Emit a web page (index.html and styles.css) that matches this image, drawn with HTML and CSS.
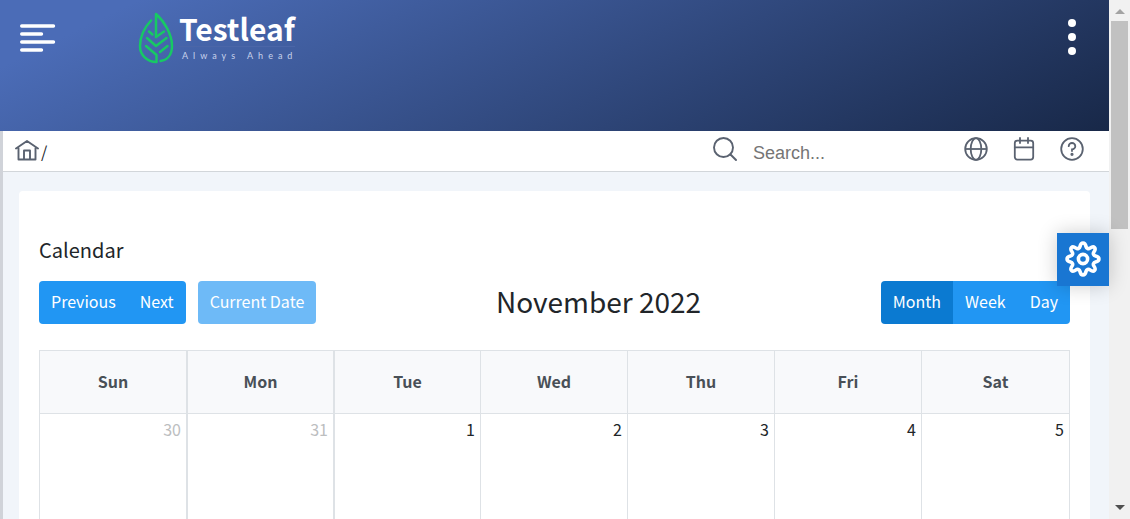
FILE: index.html
```html
<!DOCTYPE html>
<html lang="en">
<head>
<meta charset="utf-8">
<title>Testleaf - Calendar</title>
<link rel="stylesheet" href="styles.css">
</head>
<body>
<div class="page">
  <header class="topbar">
    <button class="bare menu" aria-label="Menu">
      <svg width="36" height="28" viewBox="0 0 36 28" stroke="#fff" stroke-width="3.4" stroke-linecap="round"><path d="M1.700 2H33.500M1.700 10H21.500M1.700 18H33.500M1.700 26H21.500"/></svg>
    </button>
    <a class="brand" href="#">
      <svg class="leaf" width="36" height="52" viewBox="0 0 36 52" fill="none" stroke="#17c964" stroke-width="2.5" stroke-linecap="round" stroke-linejoin="round"><path d="M13 8.500C7 15 2 24 2 34C2 43 9 50 18.500 50V43L8 34"/><path d="M18 25V2C26 9 34 22 34 34C34 42 30 48 22.500 49"/><path d="M11 19.500L14.500 22.500M18 25L26 19.500M9 26L18 34L28.500 26M29.500 34L22 40"/></svg>
      <span class="brand-text">
        <span class="brand-name">Testleaf</span>
        <span class="brand-tag">Always Ahead</span>
      </span>
    </a>
    <button class="bare dots" aria-label="More options">
      <svg width="10" height="36" viewBox="0 0 10 36" fill="#fff"><circle cx="5" cy="4" r="4"/><circle cx="5" cy="18" r="4"/><circle cx="5" cy="32" r="4"/></svg>
    </button>
  </header>
  <div class="below">
    <nav class="crumbs">
      <a class="home" href="#" aria-label="Home">
        <svg width="24" height="22" viewBox="0 0 24 22" fill="none" stroke="#5a6270" stroke-width="1.9" stroke-linejoin="round" stroke-linecap="round"><path d="M1 9.500L12 2L23 9.500M3.500 8V20.500H20.500V8M9 20.500V11.500H15V20.500"/></svg>
      </a>
      <span class="slash">/</span>
      <label class="search">
        <svg width="24" height="24" viewBox="0 0 24 24" fill="none" stroke="#5a6270" stroke-width="1.9" stroke-linecap="round"><circle cx="10.500" cy="10.500" r="9.500"/><path d="M17.500 17.500L23 23"/></svg>
        <input type="text" placeholder="Search..." aria-label="Search">
      </label>
      <div class="tools">
        <button class="bare" aria-label="Language"><svg width="24" height="24" viewBox="0 0 24 24" fill="none" stroke="#5a6270" stroke-width="1.8"><circle cx="12" cy="12" r="10.800"/><ellipse cx="12" cy="12" rx="5.300" ry="10.800"/><path d="M1.200 12H22.800"/></svg></button>
        <button class="bare" aria-label="Events"><svg width="24" height="24" viewBox="0 0 24 24" fill="none" stroke="#5a6270" stroke-width="1.8" stroke-linecap="round"><rect x="2.800" y="3.600" width="18.400" height="19" rx="2.500"/><path d="M2.800 10.400H21.200M8 1V6M16 1V6"/></svg></button>
        <button class="bare" aria-label="Help"><svg width="24" height="24" viewBox="0 0 24 24" fill="none" stroke="#5a6270" stroke-width="1.8" stroke-linecap="round"><circle cx="12" cy="12" r="10.800"/><path d="M8.700 9.200A3.300 3.200 0 1 1 12 12.400V14"/><circle cx="12" cy="17.300" r=".7" fill="#5a6270"/></svg></button>
      </div>
    </nav>
    <main class="content">
      <section class="card">
        <h1 class="card-title">Calendar</h1>
        <div class="toolbar">
          <div class="side">
            <div class="group"><button class="btn">Previous</button><button class="btn">Next</button></div>
            <button class="btn" disabled>Current Date</button>
          </div>
          <h2 class="month">November 2022</h2>
          <div class="side end">
            <div class="group"><button class="btn active">Month</button><button class="btn">Week</button><button class="btn">Day</button></div>
          </div>
        </div>
        <table class="calendar">
          <thead><tr><th>Sun</th><th>Mon</th><th>Tue</th><th>Wed</th><th>Thu</th><th>Fri</th><th>Sat</th></tr></thead>
          <tbody><tr><td class="other">30</td><td class="other">31</td><td>1</td><td>2</td><td>3</td><td>4</td><td>5</td></tr></tbody>
        </table>
      </section>
    </main>
  </div>
  <button class="bare settings" aria-label="Settings">
    <svg width="36" height="36" viewBox="0 0 36 36" fill="none" stroke="#fff" stroke-width="3.600" stroke-linejoin="round"><circle cx="18" cy="18" r="4.600"/><path d="M15 5.500C16 .9 20 .9 21 5.500C21.500 7.600 23.500 8.200 25 7.100C29 4.300 31.700 7 28.900 11C27.800 12.500 28.400 14.500 30.500 15C35.100 16 35.100 20 30.500 21C28.400 21.500 27.800 23.500 28.900 25C31.700 29 29 31.700 25 28.900C23.500 27.800 21.500 28.400 21 30.500C20 35.100 16 35.100 15 30.500C14.500 28.400 12.500 27.800 11 28.900C7 31.700 4.300 29 7.100 25C8.200 23.500 7.600 21.500 5.500 21C.9 20 .9 16 5.500 15C7.600 14.500 8.200 12.500 7.100 11C4.300 7 7 4.300 11 7.100C12.500 8.200 14.500 7.600 15 5.500Z"/></svg>
  </button>
</div>
<div class="scrollbar" aria-hidden="true">
  <svg width="10" height="5" viewBox="0 0 10 5"><path d="M0 5L5 0L10 5Z" fill="#a3a3a3"/></svg>
  <div class="track"><div class="thumb"></div></div>
  <svg width="10" height="5" viewBox="0 0 10 5"><path d="M0 0L5 5L10 0Z" fill="#505050"/></svg>
</div>
</body>
</html>
```
FILE: styles.css
```css
* { box-sizing: border-box; }
body {
  margin: 0;
  height: 100vh;
  display: flex;
  overflow: hidden;
  background: #f1f5fa;
  color: #212529;
  font-family: "Noto Sans CJK SC", "Noto Sans", sans-serif;
  font-size: 16px;
}
svg { display: block; }
.bare { padding: 0; border: 0; background: none; }
.page {
  position: relative;
  flex: 1;
  min-width: 0;
  display: flex;
  flex-direction: column;
}
.topbar {
  flex: none;
  display: flex;
  align-items: flex-start;
  padding: 12px 32px 67px 20px;
  background: linear-gradient(154deg, #4b6cb7 10%, #182848 100%);
}
.menu { margin-top: 12px; }
.brand {
  display: flex;
  gap: 5px;
  margin-left: 82px;
  color: #fff;
  text-decoration: none;
}
.brand-text { display: flex; flex-direction: column; }
.brand-name {
  font-size: 30px;
  line-height: 32px;
  padding-bottom: 2px;
  font-weight: 700;
  border-bottom: 1px solid #4b66a8;
}
.brand-tag {
  padding-left: 3px;
  font-family: Lato, sans-serif;
  font-size: 9px;
  line-height: 17px;
  letter-spacing: 5px;
  margin-right: -5px;
  color: #c8d3ec;
}
.dots { margin: 7px 0 0 auto; }
.below {
  flex: 1;
  min-height: 0;
  display: flex;
  flex-direction: column;
  border-left: 3px solid #d0d3d9;
}
.crumbs {
  flex: none;
  display: flex;
  align-items: center;
  height: 41px;
  padding: 0 25px 0 12px;
  background: #fff;
  border-bottom: 1px solid #d2d6da;
}
.slash { margin-left: 2px; font-size: 16px; line-height: 24px; }
.search {
  display: flex;
  align-items: center;
  gap: 16px;
  margin-left: auto;
}
.search input {
  width: 195px;
  height: 36px;
  padding: 4px 0 0;
  border: 0;
  background: none;
  font: 18px "Liberation Sans", sans-serif;
}
.search input::placeholder { color: #757575; }
.tools { display: flex; gap: 24px; margin-left: 16px; }
.search svg, .tools { margin-bottom: 4px; }
.home { margin-bottom: 2px; }
.content { flex: 1; min-height: 0; display: flex; padding: 19px 19px 0 16px; }
.card {
  flex: 1;
  min-width: 0;
  display: flex;
  flex-direction: column;
  padding: 44px 20px 0;
  border-radius: 4px 4px 0 0;
  background: #fff;
}
.card-title {
  margin: 0 0 16px;
  font-size: 20px;
  line-height: 30px;
  font-weight: 400;
}
.toolbar { display: flex; align-items: center; justify-content: space-between; }
.side { display: flex; gap: 12px; }
.group { display: flex; }
.btn {
  height: 43px;
  padding: 0 12px 3px;
  border: 0;
  border-radius: 4px;
  background: #2196f3;
  color: #fff;
  font: 16px "Noto Sans CJK SC", "Noto Sans", sans-serif;
}
.btn:disabled { opacity: .65; }
.btn.active { background: #0b7ad1; }
.group .btn:not(:last-child) { border-top-right-radius: 0; border-bottom-right-radius: 0; }
.group .btn:not(:first-child) { border-top-left-radius: 0; border-bottom-left-radius: 0; }
.month { margin: 0; padding-bottom: 2px; font-size: 28px; line-height: 41px; font-weight: 400; }
.calendar {
  flex: 1;
  width: 100%;
  margin-top: 26px;
  table-layout: fixed;
  border-collapse: separate;
  border-spacing: 0;
  border: 1px solid #dee2e6;
  border-bottom: 0;
}
.calendar th {
  height: 63px;
  padding: 0 0 2px;
  background: #f8f9fb;
  border-bottom: 1px solid #dee2e6;
  border-right: 1px solid #dee2e6;
  color: #495057;
  font-weight: 700;
}
.calendar td {
  padding: 3px 5px 0;
  vertical-align: top;
  text-align: right;
  line-height: 24px;
  border-right: 1px solid #dee2e6;
}
.calendar th:nth-child(2), .calendar td:nth-child(2),
.calendar th:nth-child(3), .calendar td:nth-child(3) { border-left: 1px solid #dee2e6; }
.calendar th:last-child, .calendar td:last-child { border-right: 0; }
.calendar .other { color: #bcbebf; }
.settings {
  position: absolute;
  right: 0;
  top: 233px;
  width: 52px;
  height: 53px;
  padding-bottom: 2px;
  display: grid;
  place-items: center;
  background: #1976d2;
  box-shadow: 0 0 20px rgba(0, 0, 0, .2);
}
.scrollbar {
  flex: none;
  width: 21px;
  display: flex;
  flex-direction: column;
  align-items: center;
  padding: 9px 0 9px;
  background: #f1f1f1;
}
.track { flex: 1; width: 17px; padding-top: 7px; }
.thumb { height: 43%; background: #c1c1c1; }
```
